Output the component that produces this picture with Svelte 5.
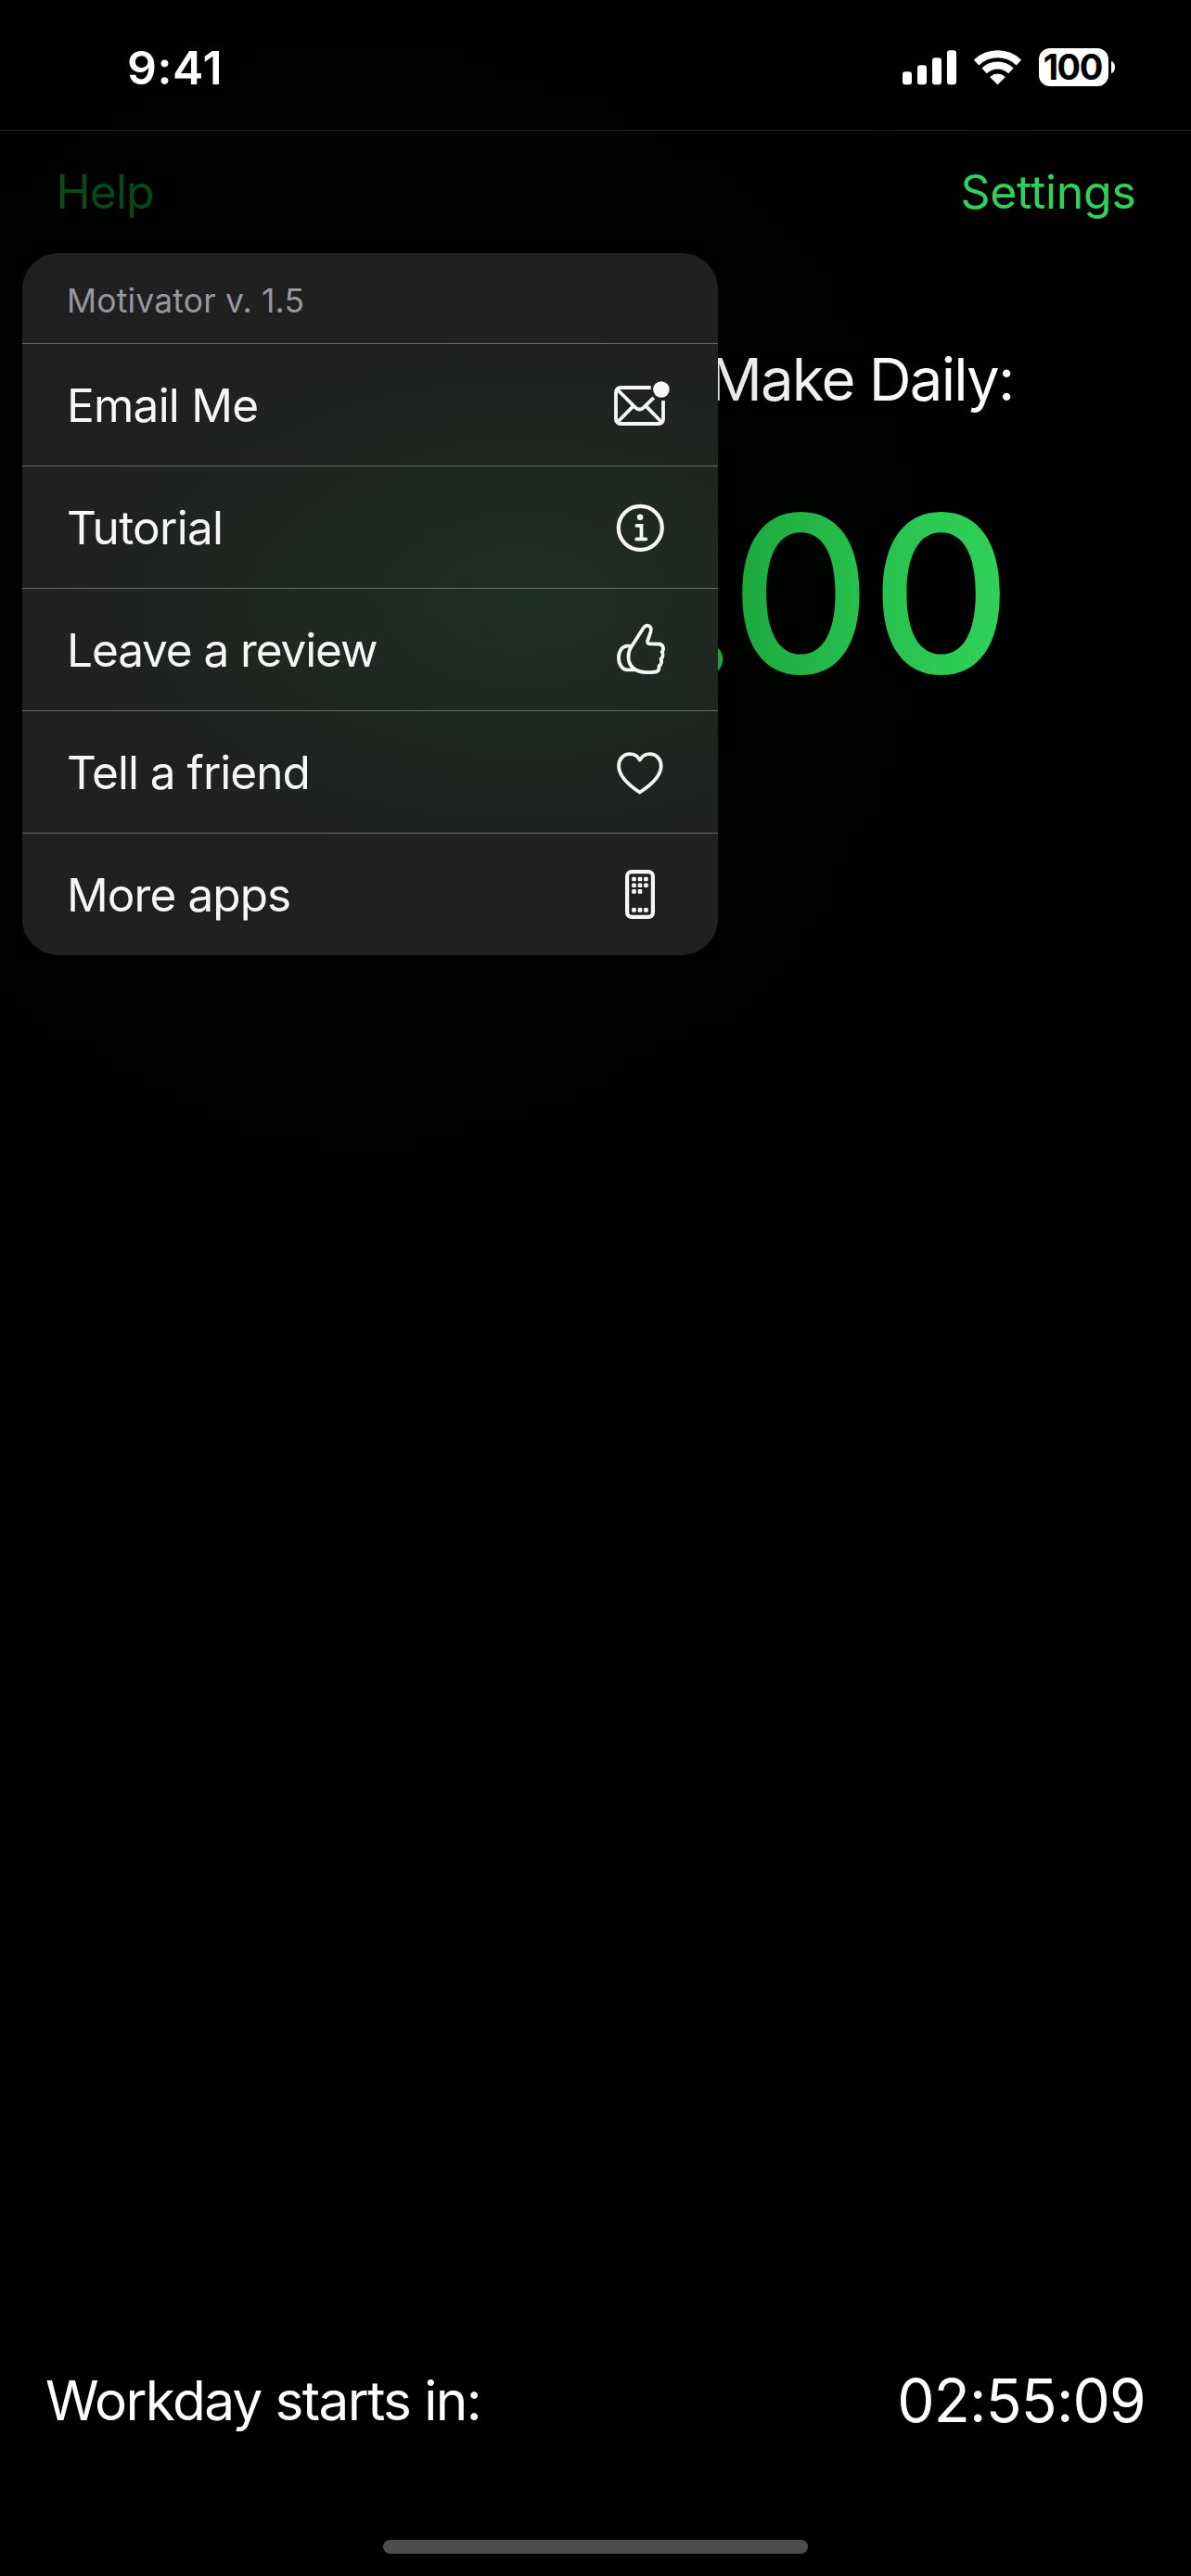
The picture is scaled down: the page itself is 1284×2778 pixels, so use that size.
<script>
  const items = [
    { label: 'Email Me', icon: 'mail', tracking: -0.76 },
    { label: 'Tutorial', icon: 'info', tracking: -0.72 },
    { label: 'Leave a review', icon: 'thumb', tracking: -1.1 },
    { label: 'Tell a friend', icon: 'heart', tracking: -1.0 },
    { label: 'More apps', icon: 'phone', tracking: -0.91 }
  ];
  const appDots = [
    [29.5, 20], [36, 20], [42.4, 20],
    [29.5, 26.7], [36, 26.7], [42.4, 26.7],
    [29.5, 33.4], [36, 33.4],
    [29.5, 53.4], [36, 53.4], [42.4, 53.4]
  ];
</script>

<div class="screen">
  <header class="status">
    <span class="clock">9:41</span>
    <div class="indicators">
      <svg class="signal" viewBox="0 0 58 38" aria-hidden="true">
        <rect x="0" y="23.2" width="10" height="14" rx="3" />
        <rect x="16" y="16.2" width="10" height="21" rx="3" />
        <rect x="32" y="8.2" width="10" height="29" rx="3" />
        <rect x="48" y="0.2" width="10" height="37" rx="3" />
      </svg>
      <svg class="wifi" viewBox="0 0 51 38" aria-hidden="true">
        <path class="band" d="M2.6 13.5A33 33 0 0 1 48.4 13.5" />
        <path class="band" d="M11.1 22.3A20.7 20.7 0 0 1 39.9 22.3" />
        <path d="M25.5 36.6L18 29.1A11 11 0 0 1 33 29.1Z" stroke="#fff" stroke-width="1.2" stroke-linejoin="round" />
      </svg>
      <div class="battery">
        <span class="level">100</span>
        <span class="nub"></span>
      </div>
    </div>
  </header>

  <nav class="toolbar">
    <span class="help">Help</span>
    <span class="settings">Settings</span>
  </nav>

  <main>
    <h1>Make Daily:</h1>
    <div class="amount"><span class="point">.</span>00</div>
  </main>

  <footer>
    <span class="until">Workday starts in:</span>
    <span class="timer">02:55:09</span>
  </footer>
  <div class="home"><span></span></div>

  <div class="menu">
    <div class="title">Motivator v. 1.5</div>
    {#each items as item}
      <div class="item">
        <span style:letter-spacing="{item.tracking}px">{item.label}</span>
        <svg class="icon" viewBox="0 0 72 73" aria-hidden="true">
          {#if item.icon === 'mail'}
            <path d="M47.7 18H15a5 5 0 0 0-5 5V52a5 5 0 0 0 5 5H56a5 5 0 0 0 5-5V32" />
            <path d="M11.5 20L30.8 39.4Q35.4 43.8 40 39.4L50.8 28.8M11.5 55.5L28.5 38.2M59.5 55.5L42.6 38.2" />
            <circle class="solid" cx="58.9" cy="20" r="8.8" />
          {:else if item.icon === 'info'}
            <circle cx="36.3" cy="37.3" r="23.5" stroke-width="4.2" />
            <circle class="solid" cx="36.1" cy="25.7" r="3.3" />
            <path d="M32.4 34.8H37.5V49.3M32.2 49.4H42.3" stroke-linecap="round" />
          {:else if item.icon === 'thumb'}
            <path d="M43.7 10.6C41.8 10.6 40.6 11.7 39.6 13.3L27.7 32C24.8 35.5 23.5 40 23.5 44.5C23.5 54.5 31 60.9 43 61.1C49 61.3 54 61.3 55.8 59C57 57.2 56 55.5 56.8 54C59.5 51.8 59.3 48.5 58.6 46.6C61 44.5 61 41 59.8 39C62 36 61.3 30.6 56 30.5L46.5 30.4C44.5 30.4 43.5 29 44.2 27L47.6 17C48.7 13.5 47 10.6 43.7 10.6Z" />
            <path d="M27 32.6H22.5C16.5 32.6 13 38.5 13 45.5C13 52.6 17 58.3 22.5 58.3H30.5" />
          {:else if item.icon === 'heart'}
            <path d="M35.8 23.6C33.5 19.5 29.5 17.2 25 17.2C18 17.2 13.1 22.7 13.1 30C13.1 40.5 22 49.5 35.7 58.5C49.6 49.5 58.7 40.5 58.7 30C58.7 22.7 53.6 17.2 46.6 17.2C42.1 17.2 38.2 19.5 35.8 23.6Z" stroke-linejoin="round" />
          {:else}
            <rect x="22.1" y="12.2" width="27.8" height="48.6" rx="4.8" stroke-width="4.2" />
            {#each appDots as [x, y]}
              <rect class="solid" x={x - 2.3} y={y - 2.3} width="4.6" height="4.6" rx="1" />
            {/each}
          {/if}
        </svg>
      </div>
    {/each}
  </div>
</div>

<style>
  :global(body) {
    background: #000;
  }
  .screen {
    position: relative;
    display: flex;
    flex-direction: column;
    width: 1284px;
    height: 2778px;
    overflow: hidden;
    background: radial-gradient(ellipse 900px 900px at 400px 640px, #000200 0 50%, #000 100%);
    color: #fff;
    font-family: Inter, 'Liberation Sans', sans-serif;
    white-space: nowrap;
  }
  .status {
    box-sizing: border-box;
    height: 141px;
    padding: 5.6px 82px 0 137px;
    border-bottom: 1px solid #222422;
    display: flex;
    align-items: center;
    justify-content: space-between;
  }
  .clock {
    font-size: 50px;
    font-weight: 600;
    letter-spacing: 0.6px;
  }
  .indicators {
    display: flex;
    align-items: center;
    gap: 19px;
    fill: #fff;
  }
  .signal {
    width: 58px;
    height: 38px;
  }
  .wifi {
    width: 51px;
    height: 38px;
  }
  .band {
    fill: none;
    stroke: #fff;
    stroke-width: 8;
  }
  .battery {
    display: flex;
    align-items: center;
    gap: 3px;
  }
  .level {
    width: 75px;
    height: 41px;
    border-radius: 12px;
    background: #fff;
    color: #000;
    font-size: 38px;
    font-weight: 700;
    line-height: 41px;
    letter-spacing: -1.6px;
    text-align: center;
    text-indent: -2.5px;
  }
  .nub {
    width: 4px;
    height: 13px;
    border-radius: 0 4px 4px 0 / 0 6.5px 6.5px 0;
    background: #fff;
  }
  .toolbar {
    height: 132px;
    padding: 0 59.5px 0 60.6px;
    display: flex;
    align-items: center;
    justify-content: space-between;
    font-size: 50px;
  }
  .help {
    color: #0a481b;
    letter-spacing: -1px;
  }
  .settings {
    color: #30d158;
    letter-spacing: -0.3px;
  }
  main {
    flex: 1;
    display: flex;
    flex-direction: column;
    align-items: flex-end;
    padding-right: 191.5px;
  }
  h1 {
    margin: 0;
    font-size: 63.5px;
    font-weight: 400;
    line-height: 272px;
    letter-spacing: -1.8px;
    color: transparent;
    background: linear-gradient(90deg, #e6e6e6, #fff 85%);
    background-clip: text;
  }
  .amount {
    margin-right: 2.7px;
    font-size: 236px;
    font-weight: 500;
    line-height: 190px;
    letter-spacing: -1px;
    color: transparent;
    background: linear-gradient(90deg, #1aa53b 12%, #27bf4d 55%, #30d158 96%);
    background-clip: text;
  }
  .point {
    letter-spacing: -11px;
  }
  footer {
    height: 177px;
    padding: 0 49px;
    display: flex;
    align-items: center;
    justify-content: space-between;
  }
  .until {
    font-size: 58.5px;
    letter-spacing: -1.63px;
  }
  .timer {
    font-size: 64px;
    letter-spacing: -0.8px;
  }
  .home {
    height: 101px;
    display: flex;
    justify-content: center;
    align-items: flex-end;
  }
  .home span {
    width: 458px;
    height: 15px;
    margin-bottom: 24px;
    border-radius: 8px;
    background: #4d4d4d;
  }
  /* Context menu floating over the page content */
  .menu {
    position: absolute;
    left: 24px;
    top: 273px;
    width: 750px;
    border-radius: 39px;
    overflow: hidden;
    color: #f6f6f6;
    background: radial-gradient(ellipse 520px 300px at 540px 375px, #1e2d23 0%, #1f2922 35%, #202321 70%, #202020 100%);
  }
  .title {
    height: 90px;
    padding: 7px 48px 0;
    color: #98979e;
    font-size: 35.5px;
    line-height: 90px;
    letter-spacing: 0.17px;
  }
  .item {
    box-sizing: border-box;
    height: 132px;
    padding: 0 48px;
    border-top: 1px solid rgb(235 255 240 / 33%);
    display: flex;
    align-items: center;
    justify-content: space-between;
    font-size: 49.5px;
  }
  .icon {
    width: 72px;
    height: 73px;
    fill: none;
    stroke: #f6f6f6;
    stroke-width: 3.8;
  }
  .solid {
    fill: #f6f6f6;
    stroke: none;
  }
</style>
